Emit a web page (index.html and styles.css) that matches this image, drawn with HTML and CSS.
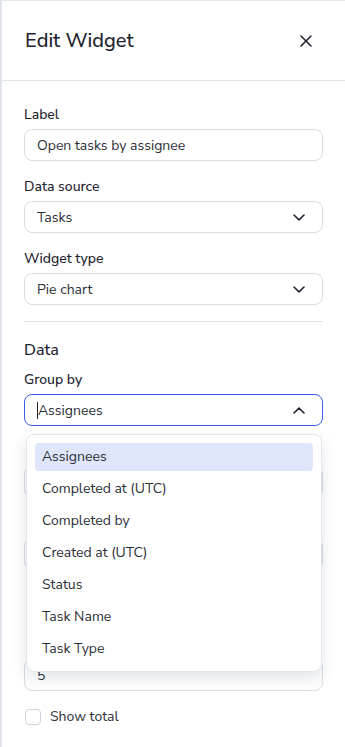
FILE: index.html
```html
<!DOCTYPE html>
<html lang="en">

<head>
    <meta charset="UTF-8">
    <meta name="viewport" content="width=device-width, initial-scale=1.0">
    <title>Edit Widget</title>
    <link rel="stylesheet" href="styles.css">
</head>

<body>
    <div class="panel">
        <div class="panel-header">
            <h2>Edit Widget</h2>
            <button class="close-btn" aria-label="Close">
                <svg width="14" height="14" viewBox="0 0 14 14"><path d="M2 2L12 12M12 2L2 12" stroke="#1f2430" stroke-width="1.6" stroke-linecap="round"/></svg>
            </button>
        </div>

        <div class="panel-body">
            <div class="field">
                <label>Label</label>
                <div class="input">Open tasks by assignee</div>
            </div>

            <div class="field">
                <label>Data source</label>
                <div class="input select">
                    <span>Tasks</span>
                    <svg class="chevron" width="12" height="7" viewBox="0 0 12 7"><path d="M1 1L6 5.8L11 1" fill="none" stroke="#1f2430" stroke-width="1.6" stroke-linecap="round" stroke-linejoin="round"/></svg>
                </div>
            </div>

            <div class="field">
                <label>Widget type</label>
                <div class="input select">
                    <span>Pie chart</span>
                    <svg class="chevron" width="12" height="7" viewBox="0 0 12 7"><path d="M1 1L6 5.8L11 1" fill="none" stroke="#1f2430" stroke-width="1.6" stroke-linecap="round" stroke-linejoin="round"/></svg>
                </div>
            </div>

            <hr class="divider">

            <h3>Data</h3>

            <div class="field group-by">
                <label>Group by</label>
                <div class="input select focused">
                    <span><span class="caret"></span>Assignees</span>
                    <svg class="chevron" width="12" height="7" viewBox="0 0 12 7"><path d="M1 6L6 1.2L11 6" fill="none" stroke="#1f2430" stroke-width="1.6" stroke-linecap="round" stroke-linejoin="round"/></svg>
                </div>

                <ul class="menu">
                    <li class="active">Assignees</li>
                    <li>Completed at (UTC)</li>
                    <li>Completed by</li>
                    <li>Created at (UTC)</li>
                    <li>Status</li>
                    <li>Task Name</li>
                    <li>Task Type</li>
                </ul>
            </div>

            <!-- fields hidden under the open menu -->
            <div class="field">
                <div class="spacer"></div>
                <div class="input select"></div>
            </div>

            <div class="field">
                <div class="spacer"></div>
                <div class="input select"></div>
            </div>

            <div class="field limit">
                <div class="input">5</div>
            </div>

            <label class="checkbox">
                <span class="box"></span>
                Show total
            </label>
        </div>
    </div>
</body>

</html>
```

FILE: styles.css
```css
body {
    margin: 0;
    font-family: "Nunito Sans", Lato, "Open Sans", sans-serif;
    color: #1f2430;
    background-color: white;
}

.panel {
    height: 747px;
    border-left: 2px solid #dfe3ec;
    border-top: 1px solid #e4e7ee;
    box-sizing: border-box;
    overflow: hidden;
}

.panel-header {
    height: 79px;
    display: flex;
    align-items: center;
    justify-content: space-between;
    padding: 0 28px 0 23px;
    border-bottom: 1px solid #dde1ea;
}

h2 {
    margin: 0;
    font-size: 20px;
    font-weight: 500;
}

.close-btn {
    background: none;
    border: none;
    padding: 4px;
    display: flex;
    cursor: pointer;
}

.panel-body {
    padding: 24px 22px 0 22px;
}

.field {
    margin-bottom: 16px;
}

.field label {
    display: block;
    font-size: 14px;
    font-weight: 500;
    line-height: 20px;
    margin-bottom: 4px;
}

.spacer {
    height: 24px;
}

.input {
    height: 32px;
    box-sizing: border-box;
    border: 1px solid #d8dce5;
    border-radius: 8px;
    padding: 0 12px;
    font-size: 14px;
    display: flex;
    align-items: center;
    color: #2b2f38;
}

.select {
    justify-content: space-between;
}

.chevron {
    margin-right: 5px;
}

.focused {
    border: 1.5px solid #3b5de7;
}

.caret {
    display: inline-block;
    width: 1px;
    height: 17px;
    background-color: #1f2430;
    vertical-align: -4px;
}

.divider {
    border: none;
    border-top: 1px solid #dde1ea;
    margin: 0 0 16px 0;
}

h3 {
    margin: 0 0 8px 0;
    font-size: 16px;
    font-weight: 500;
    line-height: 24px;
}

.group-by {
    position: relative;
}

.menu {
    position: absolute;
    top: 64px;
    left: 2px;
    right: 1px;
    margin: 0;
    padding: 8px;
    list-style: none;
    background-color: white;
    border: 1px solid #e2e5ec;
    border-radius: 8px;
    box-shadow: 0 6px 16px rgba(20, 30, 60, 0.12);
    z-index: 2;
}

.menu li {
    height: 28px;
    line-height: 28px;
    padding: 0 7px;
    margin-bottom: 4px;
    font-size: 14px;
    color: #2b2f38;
    border-radius: 4px;
}

.menu li:last-child {
    margin-bottom: 0;
}

.menu li.active {
    background-color: #dfe6fb;
}

.limit {
    margin-top: 89px;
    margin-bottom: 16px;
}

.checkbox {
    display: flex;
    align-items: center;
    gap: 9px;
    font-size: 14px;
    color: #2b2f38;
}

.box {
    width: 16px;
    height: 16px;
    box-sizing: border-box;
    border: 1px solid #cfd4de;
    border-radius: 4px;
    margin-left: 1px;
}
```
